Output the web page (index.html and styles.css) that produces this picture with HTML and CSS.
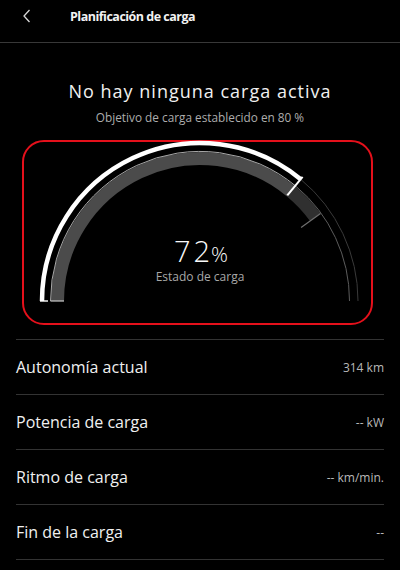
FILE: index.html
```html
<!DOCTYPE html>
<html lang="es">
<head>
    <meta charset="UTF-8">
    <meta name="viewport" content="width=device-width, initial-scale=1.0">
    <title>Planificación de carga</title>
    <link rel="stylesheet" href="styles.css">
</head>
<body>

    <header class="topbar">
        <span class="back">
            <svg width="8" height="14" viewBox="0 0 8 14">
                <path d="M6.5 1 L1 7 L6.5 13" fill="none" stroke="#d8d8d8" stroke-width="1.3"/>
            </svg>
        </span>
        <h1 class="topbar-title">Planificación de carga</h1>
    </header>

    <section class="status">
        <h2 class="status-title">No hay ninguna carga activa</h2>
        <p class="status-sub">Objetivo de carga establecido en 80 %</p>
    </section>

    <div class="gauge-card">
        <!-- viewBox uses page coordinates, arc centre at 200,302 -->
        <svg class="gauge" width="347" height="181" viewBox="24 143 347 181">
            <!-- outer track -->
            <path d="M300.7 180.3 A158 158 0 0 1 358 302" fill="none" stroke="#3a3a3a" stroke-width="1"/>
            <!-- inner band: charged part, then up to target -->
            <path d="M57.5 302 A142.5 142.5 0 0 1 290.8 192.2" fill="none" stroke="#4b4b4b" stroke-width="13"/>
            <path d="M290.8 192.2 A142.5 142.5 0 0 1 315.3 218.2" fill="none" stroke="#303030" stroke-width="13"/>
            <!-- band edge line -->
            <path d="M50.5 302 A149.5 149.5 0 0 1 296 187.3" fill="none" stroke="#a8a8a8" stroke-width="1"/>
            <path d="M296 187.3 A149.5 149.5 0 0 1 349.5 302" fill="none" stroke="#5c5c5c" stroke-width="1"/>
            <line x1="50.5" y1="302" x2="64" y2="302" stroke="#c8c8c8" stroke-width="1.2"/>
            <!-- state of charge -->
            <path d="M42 302 A158 158 0 0 1 300.7 180.3" fill="none" stroke="#ffffff" stroke-width="4.5"/>
            <line x1="40" y1="302" x2="48" y2="302" stroke="#ffffff" stroke-width="1.4"/>
            <line x1="287.3" y1="196.4" x2="302.6" y2="177.9" stroke="#ffffff" stroke-width="2"/>
            <!-- target marker -->
            <line x1="301.1" y1="228.5" x2="320.5" y2="214.4" stroke="#707070" stroke-width="1.2"/>

            <text x="201" y="262.5" text-anchor="middle" class="soc"><tspan class="soc-num soc-gap">7</tspan><tspan class="soc-num">2</tspan><tspan class="soc-unit" dx="1">%</tspan></text>
            <text x="200" y="281.5" text-anchor="middle" class="soc-label">Estado de carga</text>
        </svg>
    </div>

    <ul class="info-list">
        <li class="info-row"><span class="info-label">Autonomía actual</span><span class="info-value">314 km</span></li>
        <li class="info-row"><span class="info-label">Potencia de carga</span><span class="info-value">-- kW</span></li>
        <li class="info-row"><span class="info-label">Ritmo de carga</span><span class="info-value">-- km/min.</span></li>
        <li class="info-row"><span class="info-label">Fin de la carga</span><span class="info-value">--</span></li>
    </ul>

</body>
</html>
```

FILE: styles.css
```css
body {
    font-family: "Open Sans", "Noto Sans", sans-serif;
    background-color: #000;
    color: #f0f0f0;
    margin: 0;
    padding: 0;
    width: 400px;
    height: 570px;
    overflow: hidden;
}

.topbar {
    height: 42px;
    border-bottom: 1px solid #383838;
    display: flex;
    align-items: center;
}

.back {
    display: flex;
    margin-left: 23px;
    margin-right: 39px;
    margin-top: -10px;
}

.topbar-title {
    margin: -10px 0 0 0;
    font-size: 12.5px;
    font-weight: bold;
    letter-spacing: -0.5px;
    color: #f2f2f2;
}

.status {
    text-align: center;
    padding-top: 36px;
}

.status-title {
    margin: 0;
    font-size: 18px;
    font-weight: normal;
    line-height: 24px;
    letter-spacing: 1px;
    color: #f0f0f0;
}

.status-sub {
    margin: 6px 0 0 0;
    font-size: 11.8px;
    line-height: 16px;
    color: #adadad;
}

.gauge-card {
    margin: 15px 0 0 22px;
    width: 347px;
    height: 181px;
    border: 2px solid #e5101b;
    border-radius: 22px;
}

.gauge {
    display: block;
    overflow: visible;
}

.soc {
    fill: #fafafa;
    font-weight: 300;
}

.soc-num {
    font-size: 29px;
}

.soc-gap {
    letter-spacing: 3px;
}

.soc-unit {
    font-size: 21px;
}

.soc-label {
    fill: #a8a8a8;
    font-size: 12px;
}

.info-list {
    list-style: none;
    margin: 14px 16px 0 16px;
    padding: 0;
    border-bottom: 1px solid #333;
}

.info-row {
    height: 54px;
    border-top: 1px solid #333;
    display: flex;
    align-items: center;
    justify-content: space-between;
}

.info-label {
    font-size: 16px;
    color: #f0f0f0;
}

.info-value {
    font-size: 12px;
    color: #b8b8b8;
}
```
